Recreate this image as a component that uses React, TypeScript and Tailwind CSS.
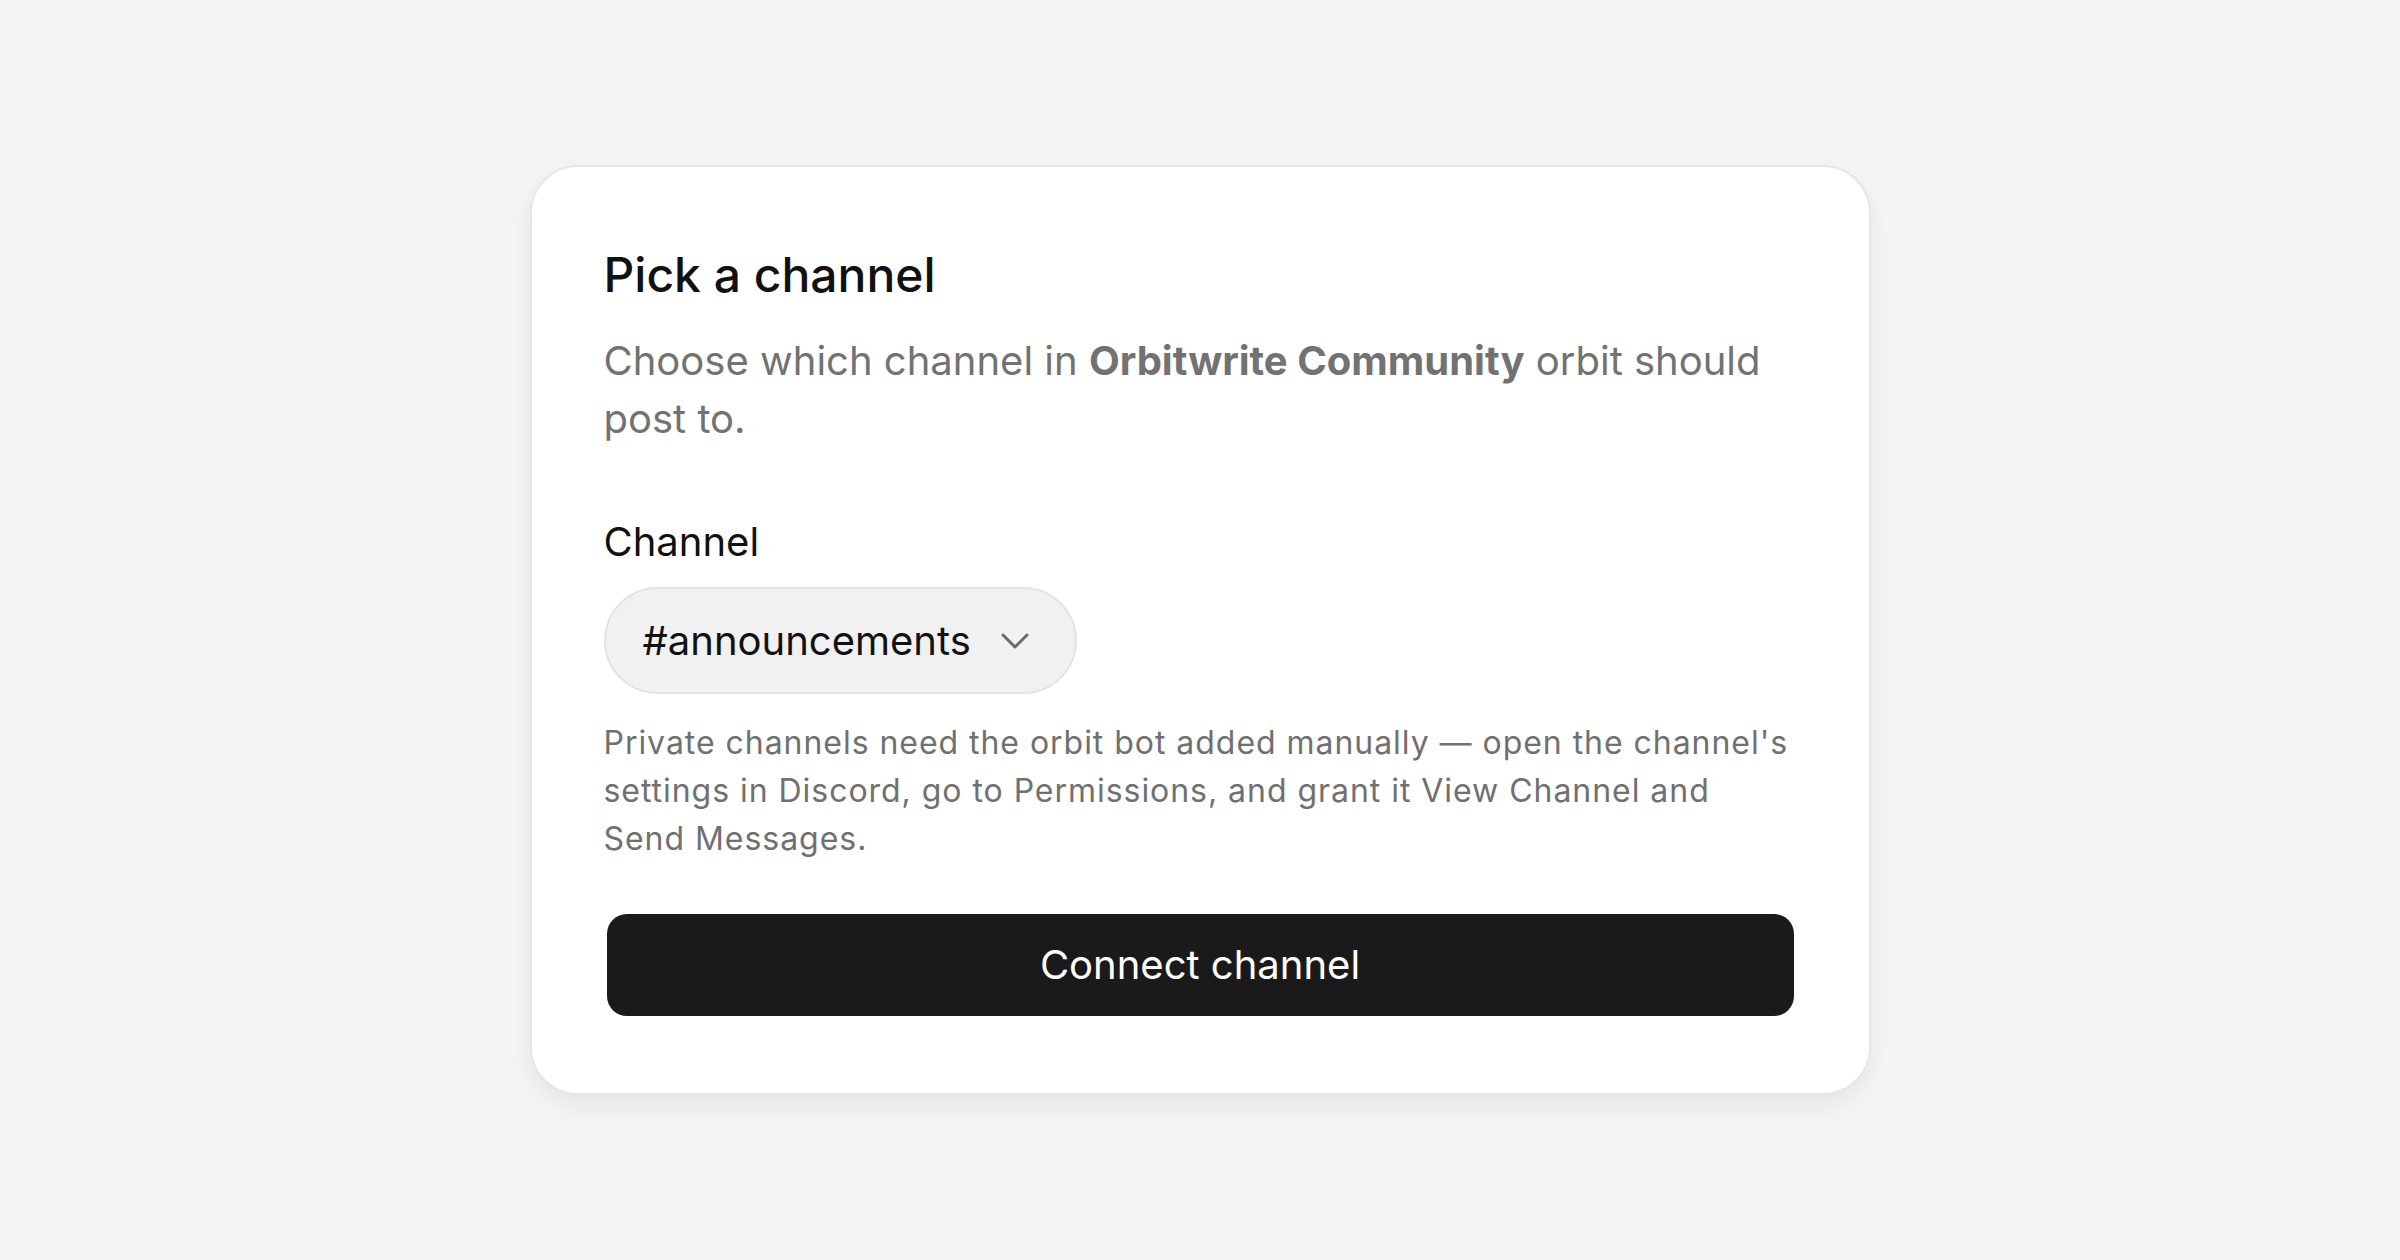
import { ChevronDown } from "lucide-react";

export default function App() {
  return (
    <div className="flex min-h-screen w-full items-center justify-center bg-[#f6f5f3] font-['Inter','Noto_Sans',sans-serif]">
      <div className="w-[1341px] rounded-[48px] border-2 border-[#e6e6e5] bg-white px-[72px] pb-[77px] pt-[72px] shadow-[0_10px_28px_rgba(0,0,0,0.07)]">
        <h1 className="text-[48px] font-medium leading-[72px] text-[#111111]">Pick a channel</h1>
        <p className="mt-[21px] text-[40px] leading-[58px] text-[#727272]">
          Choose which channel in <span className="font-bold">Orbitwrite Community</span> orbit should post to.
        </p>

        <label className="mt-[64px] block text-[40px] leading-[60px] text-[#111111]">Channel</label>
        <button
          type="button"
          className="mt-[15px] flex h-[107px] items-center gap-[20px] rounded-full border-2 border-[#e3e3e3] bg-[#f1f1f1] pl-[37px] pr-[36px] text-[40px] text-[#111111]"
        >
          <span>#announcements</span>
          <ChevronDown size={48} strokeWidth={1.5} className="text-[#6b6b6b]" />
        </button>

        <p className="mt-[25px] text-[32px] leading-[48px] tracking-[0.03em] text-[#707070]">
          Private channels need the orbit bot added manually — open the channel's settings in Discord, go to
          Permissions, and grant it View Channel and
          <br />
          Send Messages.
        </p>

        <button
          type="button"
          className="mx-[3px] mt-[51px] flex h-[102px] w-[calc(100%-6px)] items-center justify-center rounded-[20px] bg-[#1a1a1a] text-[40px] text-white"
        >
          Connect channel
        </button>
      </div>
    </div>
  );
}
